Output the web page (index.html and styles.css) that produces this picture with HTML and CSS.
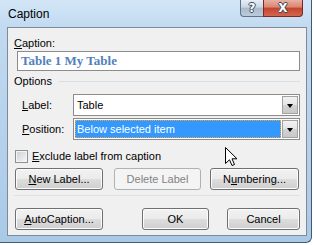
FILE: index.html
```html
<!doctype html>
<html lang="en">
	<head>
		<meta charset="UTF-8" />
		<meta name="viewport" content="width=device-width, initial-scale=1.0" />
		<title>Caption</title>
		<link rel="stylesheet" href="styles.css">
	</head>
	<body>
		<div class="window">
			<div class="titlebar">
				<span class="title">Caption</span>
				<div class="caption-buttons">
					<span class="cap-btn help">?</span>
					<span class="cap-btn close">X</span>
				</div>
			</div>

			<div class="client">
				<div class="field-label"><u>C</u>aption:</div>
				<div class="caption-input">Table 1 My Table</div>

				<div class="group-title">
					<span>Options</span>
					<span class="rule"></span>
				</div>

				<div class="row">
					<span class="row-label"><u>L</u>abel:</span>
					<div class="combo">
						<span class="combo-text">Table</span>
						<span class="combo-arrow"></span>
					</div>
				</div>
				<div class="row">
					<span class="row-label"><u>P</u>osition:</span>
					<div class="combo">
						<span class="combo-text selected">Below selected item</span>
						<span class="combo-arrow"></span>
					</div>
				</div>

				<div class="check">
					<span class="box"></span>
					<span><u>E</u>xclude label from caption</span>
				</div>

				<div class="btn-row">
					<button class="btn w-new"><u>N</u>ew Label...</button>
					<button class="btn w-delete" disabled>Delete Label</button>
					<button class="btn w-num">N<u>u</u>mbering...</button>
				</div>

				<div class="separator"></div>

				<div class="btn-row bottom">
					<button class="btn w-auto"><u>A</u>utoCaption...</button>
					<button class="btn w-ok">OK</button>
					<button class="btn w-cancel">Cancel</button>
				</div>
			</div>
		</div>

		<svg class="cursor" width="13" height="20" viewBox="0 0 13 20">
			<path d="M0.5 0.5 L0.5 16.5 L4.5 12.8 L7 18.5 L9.5 17.5 L7 11.8 L12 11.8 Z" fill="#fff" stroke="#000" stroke-width="1" stroke-linejoin="miter" />
		</svg>
	</body>
</html>
```

FILE: styles.css
```css
body { margin: 0; background: #fff; font-family: "Segoe UI", "Liberation Sans", sans-serif; font-size: 11px; color: #000; }
u { text-decoration: underline; text-underline-offset: 1px; }

.window { width: 312px; height: 243px; box-sizing: border-box; border-right: 1px solid #44586e; border-bottom: 1px solid #44586e; border-bottom-right-radius: 6px; background: linear-gradient(to bottom, #d3e6f7 0px, #c1daf1 27px, #b7d2ec 120px, #aac9e7 243px); display: flex; flex-direction: column; }

.titlebar { height: 27px; display: flex; justify-content: space-between; align-items: flex-start; padding-left: 8px; }
.title { font-size: 12px; line-height: 28px; color: #000; }
.caption-buttons { display: flex; margin-right: 8px; }
.cap-btn { height: 17px; box-sizing: border-box; border: 1px solid #5f7286; border-top: none; color: #fff; font-weight: bold; font-family: "DejaVu Sans", sans-serif; text-align: center; line-height: 16px; text-shadow: -1px 0 #3b4756, 1px 0 #3b4756, 0 -1px #3b4756, 0 1px #3b4756; }
.help { width: 23px; border-bottom-left-radius: 4px; border-right: none; background: linear-gradient(to bottom, #e6eef6 0%, #cbd8e5 45%, #a8bacd 50%, #bccbdb 100%); font-size: 12px; }
.close { width: 40px; border-bottom-right-radius: 4px; border-color: #7a2a20; background: linear-gradient(to bottom, #eab0a4 0%, #d98571 45%, #c5432d 50%, #d3664f 100%); font-size: 12px; }

.client { margin-left: 7px; width: 300px; height: 209px; box-sizing: border-box; border: 1px solid #7d8a99; background: #f0f0f0; padding: 8px 6px 0 6px; }

.field-label { line-height: 14px; height: 14px; margin-bottom: 1px; }
.caption-input { margin-left: 3px; height: 20px; box-sizing: border-box; border: 1px solid #8c8c8c; background: #fff; padding-left: 3px; font-family: "Liberation Serif", serif; font-weight: bold; font-size: 13px; line-height: 18px; color: #4f81bd; }

.group-title { display: flex; align-items: center; gap: 7px; margin-top: 3px; height: 14px; line-height: 14px; }
.rule { flex: 1; border-top: 1px solid #d5dfe5; }

.row { display: flex; align-items: center; margin-top: 6px; }
.row + .row { margin-top: 2px; }
.row-label { width: 51px; padding-left: 8px; }
.combo { flex: 1; height: 22px; box-sizing: border-box; border: 1px solid #8c8c8c; background: #fff; display: flex; align-items: center; padding: 1px; }
.combo-text { flex: 1; height: 18px; line-height: 18px; padding-left: 2px; margin-right: 1px; }
.combo-text.selected { background: #3399ff; color: #fff; outline: 1px dotted #f2a33a; outline-offset: -1px; }
.combo-arrow { width: 16px; height: 18px; box-sizing: border-box; border: 1px solid #a2a2a2; background: linear-gradient(to bottom, #f2f2f2 0%, #e4e4e4 50%, #d3d3d3 51%, #c8c8c8 100%); position: relative; }
.combo-arrow::after { content: ""; position: absolute; left: 4px; top: 7px; border-left: 3px solid transparent; border-right: 3px solid transparent; border-top: 4px solid #000; }

.check { display: flex; align-items: center; gap: 4px; margin-top: 9px; margin-left: 1px; height: 14px; }
.box { width: 13px; height: 13px; box-sizing: border-box; border: 1px solid #8e8f8f; background: linear-gradient(135deg, #cbcfd5 0%, #f6f6f6 100%); box-shadow: inset 0 0 0 1px #f4f4f4; }

.btn-row { display: flex; gap: 11px; margin-top: 5px; margin-left: 1px; }
.btn-row.bottom { margin-top: 12px; }
.btn { height: 22px; box-sizing: border-box; border: 1px solid #707070; border-radius: 3px; background: linear-gradient(to bottom, #f2f2f2 0%, #ebebeb 50%, #dddddd 51%, #cfcfcf 100%); box-shadow: inset 0 0 0 1px #fcfcfc; font: inherit; color: #000; padding: 0; }
.btn:disabled { border-color: #adb2b5; background: #f4f4f4; color: #838383; box-shadow: none; }
.w-new { width: 88px; }
.w-delete { width: 87px; }
.w-num { width: 89px; margin-left: -2px; }
.w-auto { width: 88px; margin-right: 28px; }
.w-ok { width: 67px; margin-right: 7px; }
.w-cancel { width: 73px; }

.separator { margin-top: 5px; border-top: 1px solid #dfdfdf; }

.cursor { position: absolute; left: 225px; top: 147px; }
```
